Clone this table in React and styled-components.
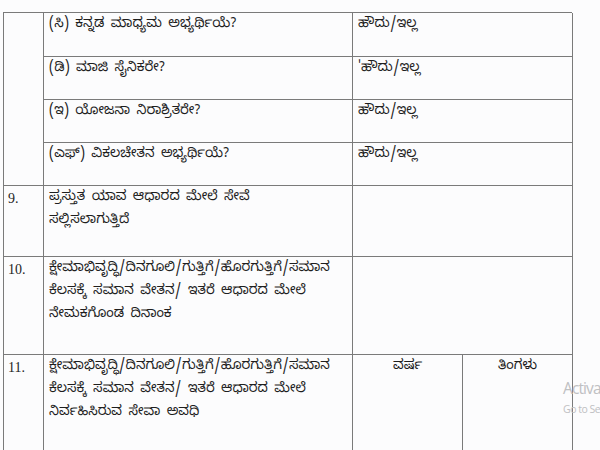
import styled, { createGlobalStyle } from "styled-components";

const Global = createGlobalStyle`
  html, body {
    margin: 0;
    padding: 0;
    background: #fcfcfd;
    overflow: hidden;
  }
  body {
    width: 600px;
    height: 450px;
    font-family: "Noto Sans Kannada", "Noto Sans", "DejaVu Sans", sans-serif;
  }
`;

const Page = styled.div`
  position: relative;
  width: 600px;
  height: 450px;
  padding: 12px 0 0 3px;
  box-sizing: border-box;
  overflow: hidden;
`;

const Table = styled.div`
  display: grid;
  grid-template-columns: 40px 309px 110px 110px;
  grid-template-rows: 44px 43px 43px 43px 71px 98px 96px;
  border-left: 1px solid #7a7a7a;
  border-top: 1px solid #7a7a7a;
  width: 569px;
  box-sizing: border-box;
`;

const Cell = styled.div`
  border-right: 1px solid #7a7a7a;
  border-bottom: 1px solid ${(p) => (p.$open ? "transparent" : "#7a7a7a")};
  padding: 1px 5px 0 5px;
  font-size: 13.5px;
  word-spacing: 2.5px;
  line-height: 23px;
  color: #1e1e1e;
  grid-column: ${(p) => p.$col || "auto"};
  grid-row: ${(p) => p.$row || "auto"};
  text-align: ${(p) => (p.$center ? "center" : "left")};
  overflow: hidden;
`;

const Num = styled(Cell)`
  font-family: "Liberation Serif", serif;
  font-size: 14px;
  padding-left: 4px;
`;

const Line = styled.div`
  white-space: nowrap;
`;

const Watermark = styled.div`
  position: absolute;
  left: 563px;
  top: 378px;
  color: #bfc0c2;
  font-family: "Open Sans", "Liberation Sans", sans-serif;
  white-space: nowrap;
`;

const WmBig = styled.div`
  font-size: 15.5px;
  letter-spacing: -0.9px;
  line-height: 21px;
`;

const WmSmall = styled.div`
  font-size: 10.5px;
  letter-spacing: -0.5px;
  line-height: 16px;
  margin-top: 2px;
`;

const subRows = [
  "(ಸಿ) ಕನ್ನಡ ಮಾಧ್ಯಮ ಅಭ್ಯರ್ಥಿಯೆ?",
  "(ಡಿ) ಮಾಜಿ ಸೈನಿಕರೇ?",
  "(ಇ) ಯೋಜನಾ ನಿರಾಶ್ರಿತರೇ?",
  "(ಎಫ್) ವಿಕಲಚೇತನ ಅಭ್ಯರ್ಥಿಯೆ?",
];

const App = () => {
  return (
    <>
      <Global />
      <Page>
        <Table>
          <Num $row="1 / span 4" />
          {subRows.map((q, i) => [
            <Cell key={"q" + i} $col="2">
              <Line>{q}</Line>
            </Cell>,
            <Cell key={"a" + i} $col="3 / span 2">
              <Line>{i === 1 ? "'ಹೌದು/ಇಲ್ಲ" : "ಹೌದು/ಇಲ್ಲ"}</Line>
            </Cell>,
          ])}

          <Num>9.</Num>
          <Cell>
            <Line>ಪ್ರಸ್ತುತ ಯಾವ ಆಧಾರದ ಮೇಲೆ ಸೇವೆ</Line>
            <Line>ಸಲ್ಲಿಸಲಾಗುತ್ತಿದೆ</Line>
          </Cell>
          <Cell $col="3 / span 2" />

          <Num>10.</Num>
          <Cell>
            <Line>ಕ್ಷೇಮಾಭಿವೃದ್ಧಿ/ದಿನಗೂಲಿ/ಗುತ್ತಿಗೆ/ಹೊರಗುತ್ತಿಗೆ/ಸಮಾನ</Line>
            <Line>ಕೆಲಸಕ್ಕೆ ಸಮಾನ ವೇತನ/ ಇತರೆ ಆಧಾರದ ಮೇಲೆ</Line>
            <Line>ನೇಮಕಗೊಂಡ ದಿನಾಂಕ</Line>
          </Cell>
          <Cell $col="3 / span 2" />

          <Num $open>11.</Num>
          <Cell $open>
            <Line>ಕ್ಷೇಮಾಭಿವೃದ್ಧಿ/ದಿನಗೂಲಿ/ಗುತ್ತಿಗೆ/ಹೊರಗುತ್ತಿಗೆ/ಸಮಾನ</Line>
            <Line>ಕೆಲಸಕ್ಕೆ ಸಮಾನ ವೇತನ/ ಇತರೆ ಆಧಾರದ ಮೇಲೆ</Line>
            <Line>ನಿರ್ವಹಿಸಿರುವ ಸೇವಾ ಅವಧಿ</Line>
          </Cell>
          <Cell $open $center>ವರ್ಷ</Cell>
          <Cell $open $center>ತಿಂಗಳು</Cell>
        </Table>
        <Watermark>
          <WmBig>Activa</WmBig>
          <WmSmall>Go to Se</WmSmall>
        </Watermark>
      </Page>
    </>
  );
};

export default App;
